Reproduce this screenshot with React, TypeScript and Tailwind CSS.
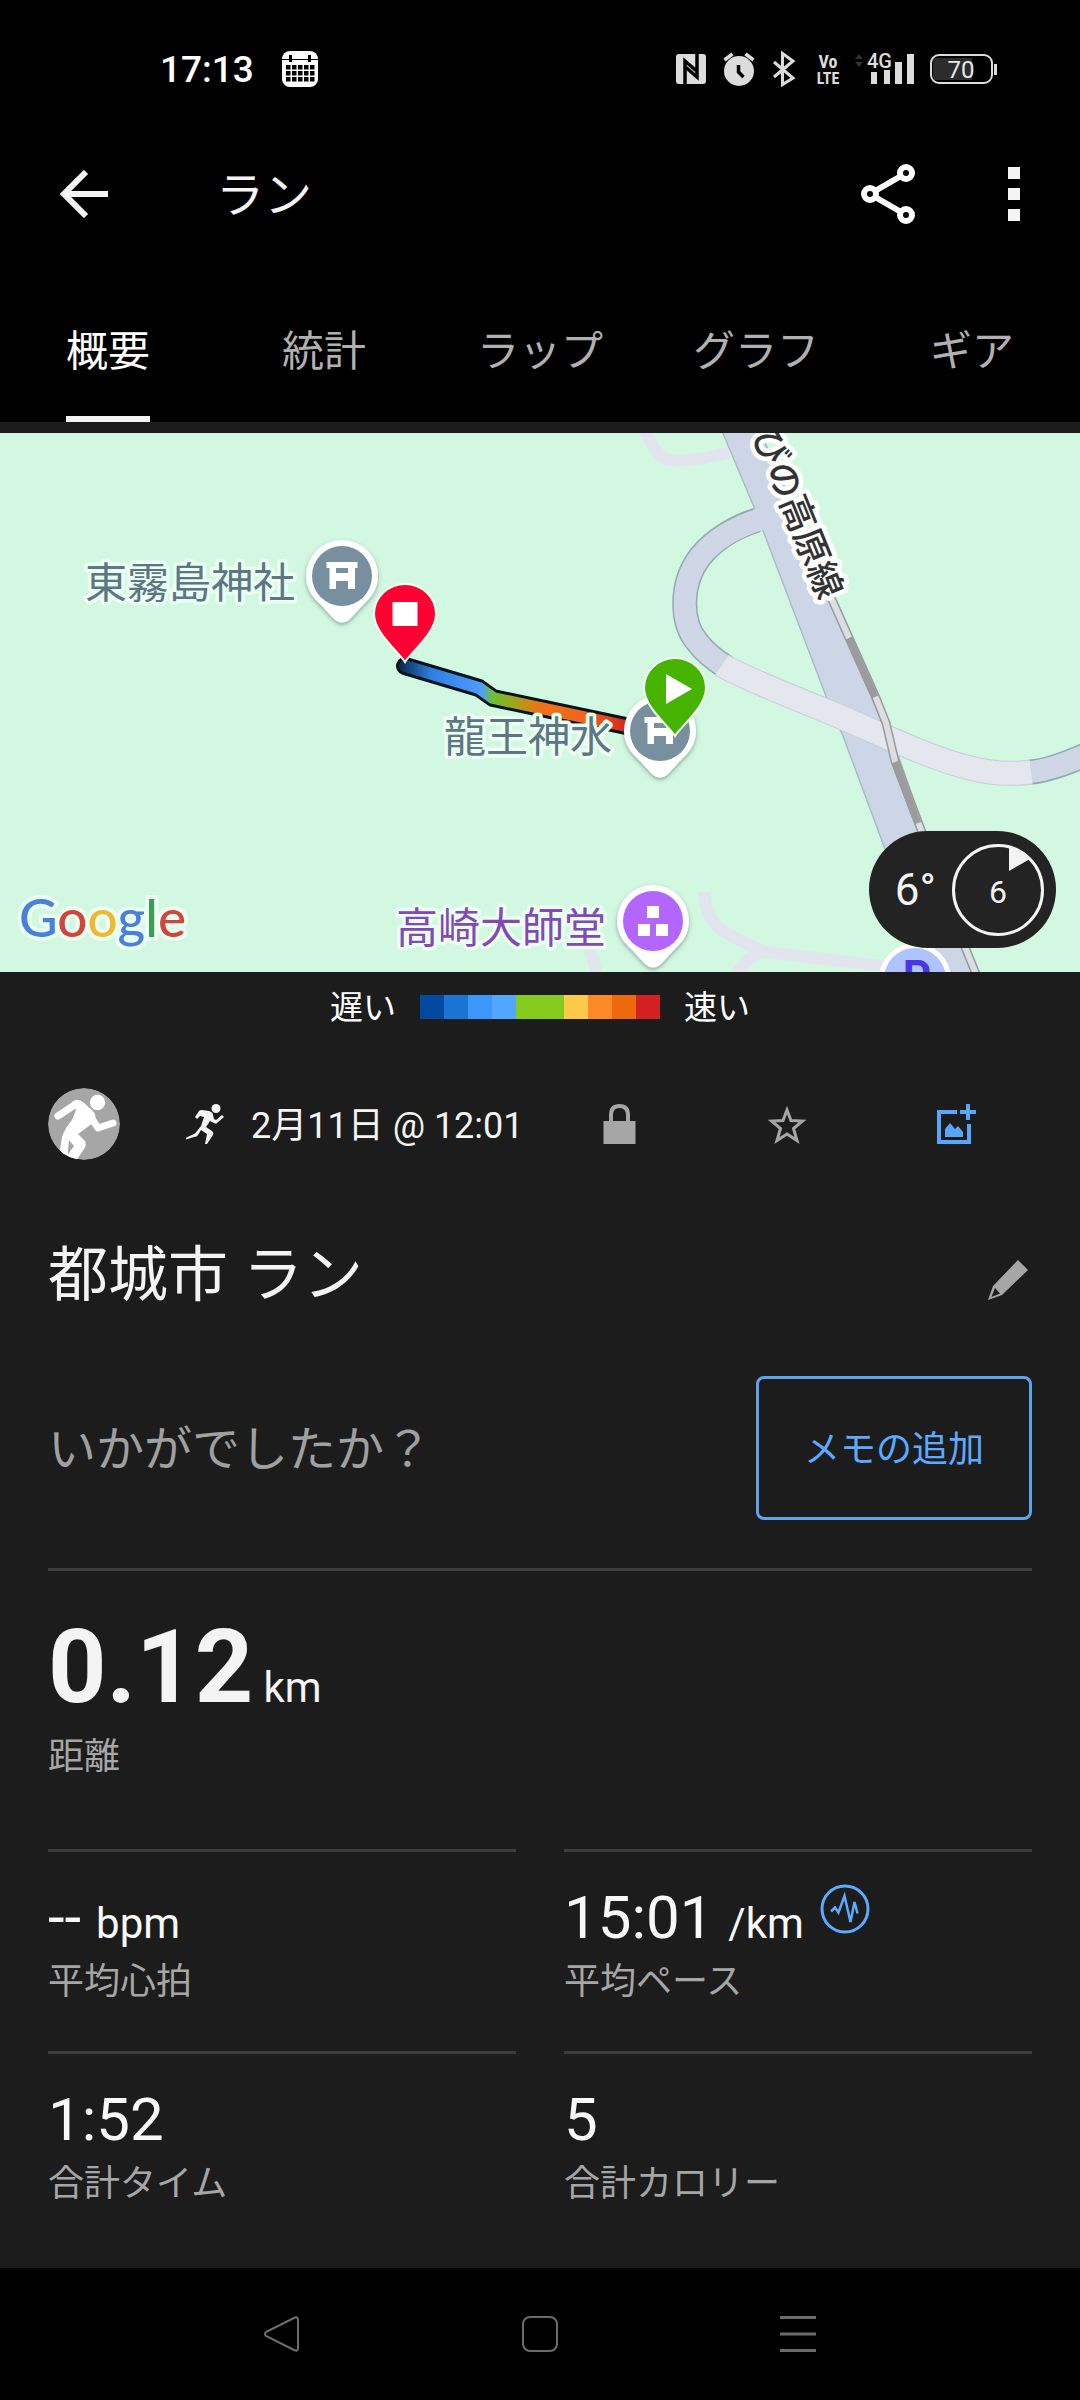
import { useState } from "react";
import type { ReactNode } from "react";

const TABS = ["概要", "統計", "ラップ", "グラフ", "ギア"];

const SPEED_COLORS = [
  "bg-[#014a9f]",
  "bg-[#1a75d2]",
  "bg-[#3b97f8]",
  "bg-[#52a6fd]",
  "bg-[#84cb1d]",
  "bg-[#84cb1d]",
  "bg-[#fdc94a]",
  "bg-[#fd8a26]",
  "bg-[#ee690b]",
  "bg-[#d32023]",
];

const GOOGLE = [
  ["G", "#4a7fe0"],
  ["o", "#d2453b"],
  ["o", "#ecb92f"],
  ["g", "#4a7fe0"],
  ["l", "#3f9c56"],
  ["e", "#d2453b"],
];

function StatusBar() {
  return (
    <div className="flex items-center justify-between bg-black pt-12 pr-[82px] pb-5 pl-40">
      <div className="flex h-[42px] items-center gap-7">
        <span className="pt-0.5 text-[37px] leading-[42px] font-medium text-white">17:13</span>
        <svg className="size-9" viewBox="0 0 36 36" fill="none">
          <rect width="36" height="36" rx="8" fill="#fff" />
          <path d="M0 8.500h36" stroke="#000" strokeWidth="1" />
          <path d="M8.500 4v7M27.500 4v7" stroke="#000" strokeWidth="3" />
          {[14, 20, 26].map((y) =>
            [4, 10, 16, 22, 28].map((x) => (
              <rect key={`${x}-${y}`} x={x} y={y} width="4.500" height="4.500" fill="#000" />
            ))
          )}
        </svg>
      </div>
      <svg className="h-[42px] w-[322px]" viewBox="676 48 322 42" fill="none">
        {/* NFC */}
        <rect x="676" y="54" width="30" height="30" rx="3" fill="#dcdcdc" />
        <path d="M685 84V61l11 9.500M697 54v23l-11-9.500" stroke="#000" strokeWidth="3.500" />
        {/* alarm */}
        <circle cx="739" cy="71" r="15" fill="#dcdcdc" />
        <path d="M724.500 60l8-6M753.500 60l-8-6" stroke="#dcdcdc" strokeWidth="3.500" />
        <path d="M738.500 65v7l5 5" stroke="#000" strokeWidth="3.500" />
        {/* bluetooth */}
        <path d="M774 62l19 16-10.500 6.500v-31L793 61l-19 16" stroke="#dcdcdc" strokeWidth="3" />
        <g fill="#dcdcdc" fontFamily="'Roboto Condensed', Roboto, sans-serif" fontWeight="700" textAnchor="middle">
          <text x="828" y="68" fontSize="18">Vo</text>
          <text x="828" y="84" fontSize="16">LTE</text>
        </g>
        <path d="M855 59l4-5 4 5zM855 62l4 5 4-5z" fill="#333" />
        <text x="867" y="68" fontSize="20" fontWeight="500" fill="#dcdcdc">4G</text>
        <path d="M871 72h6v12h-6zM884 70h6v14h-6zM895 62h7v22h-7zM907 54h7v30h-7z" fill="#dcdcdc" />
        {/* battery */}
        <path d="M935 58h37v22h-37q-2 0-2-4V62q0-4 2-4z" fill="#2c2c2c" />
        <rect x="931" y="55" width="61" height="28" rx="8" stroke="#dcdcdc" strokeWidth="2" />
        <path d="M995.500 64v11" stroke="#dcdcdc" strokeWidth="3" />
        <text x="961" y="78" fontSize="24" fill="#e8e8e8" textAnchor="middle">70</text>
      </svg>
    </div>
  );
}

function AppBar() {
  return (
    <header className="flex h-42 items-center bg-black px-[60px]">
      <button aria-label="戻る">
        <svg className="size-12" viewBox="0 0 48 48" fill="none" stroke="#f4f4f4" strokeWidth="6">
          <path d="M26 2L4 24l22 22M4 24h44" />
        </svg>
      </button>
      <h1 className="ml-[108px] flex-1 pt-1 text-[48px] leading-[60px] text-[#f4f4f4]">ラン</h1>
      <button aria-label="共有">
        <svg className="h-[60px] w-[54px]" viewBox="0 0 54 60" fill="none" stroke="#fff" strokeWidth="6">
          <path d="M14 27l26-15M14 33l26 15" />
          <circle cx="9" cy="30" r="6" />
          <circle cx="45" cy="9" r="6" />
          <circle cx="45" cy="51" r="6" />
        </svg>
      </button>
      <button aria-label="その他" className="ml-[93px] flex flex-col gap-[9px]">
        <span className="size-3 bg-[#f4f4f4]" />
        <span className="size-3 bg-[#f4f4f4]" />
        <span className="size-3 bg-[#f4f4f4]" />
      </button>
    </header>
  );
}

function PoiPin({ x, y, color, children }: { x: number; y: number; color: string; children: ReactNode }) {
  return (
    <g transform={`translate(${x} ${y})`}>
      <path
        d="M0-36A36 36 0 0 1 36 0C36 13 29 22 21 29L9 42Q0 51-9 42L-21 29C-29 22-36 13-36 0A36 36 0 0 1 0-36z"
        fill="#fff"
        filter="url(#pinShadow)"
      />
      <circle r="30" fill={color} />
      {children}
    </g>
  );
}

function Torii() {
  return (
    <path
      d="M-15.500-14h31v6h-2.500V13H6V5H-6v8h-6.500V-8h-3zM-6-8v5H6v-5z"
      fill="#fff"
      fillRule="evenodd"
    />
  );
}

function RouteMarker({ x, y, color, children }: { x: number; y: number; color: string; children: ReactNode }) {
  return (
    <g transform={`translate(${x} ${y})`}>
      <path
        d="M0 47C-6 37-31 18-31-1A31 30 0 0 1 31-1C31 18 6 37 0 47z"
        fill={color}
        stroke="#f2fff0"
        strokeWidth="2"
      />
      {children}
    </g>
  );
}

function ActivityMap() {
  return (
    <section className="relative mt-[11px] bg-[#d2f8e1]">
      <svg className="block w-full" viewBox="0 0 1080 539" fill="none">
        <defs>
          <filter id="pinShadow" x="-30%" y="-30%" width="160%" height="160%">
            <feDropShadow dx="0" dy="2" stdDeviation="2" floodColor="#456" floodOpacity="0.5" />
          </filter>
          <linearGradient id="pace" gradientUnits="userSpaceOnUse" x1="400" y1="0" x2="626" y2="0">
            <stop offset="0" stopColor="#0a2c50" />
            <stop offset="0.14" stopColor="#2f7fe0" />
            <stop offset="0.36" stopColor="#4d9dff" />
            <stop offset="0.41" stopColor="#6fbf30" />
            <stop offset="0.5" stopColor="#9aa81c" />
            <stop offset="0.62" stopColor="#ee7218" />
            <stop offset="0.82" stopColor="#f2641c" />
            <stop offset="1" stopColor="#d8261c" />
          </linearGradient>
        </defs>

        {/* footpaths */}
        <g stroke="#e2e5ed" strokeWidth="12">
          <path d="M645-6Q652 18 664 25T729 20" />
          <path d="M704 459Q706 486 722 497T766 519L890 534" />
          <path d="M766 517Q745 524 735 545M590 516l8 30" />
        </g>

        {/* highway */}
        <path
          d="M722-2L754 74 829 271 843 303 885 416 932 541 978 541 924 398 888 292 833 165 760-2z"
          fill="#cdd6e6"
          stroke="#a9bcc6"
          strokeWidth="1.500"
        />
        {/* ramp */}
        <path d="M757 87C738 93 715 105 700 124C680 150 680 190 698 210Q707 222 726 234" stroke="#94a9b3" strokeWidth="25" />
        <path d="M1030 339Q1050 338 1090 320" stroke="#94a9b3" strokeWidth="25" />
        <path d="M764 85C738 93 715 105 700 124C680 150 680 190 698 210Q707 222 726 234" stroke="#cfd7e7" strokeWidth="22" />
        <path d="M1028 339Q1050 338 1090 320" stroke="#cfd7e7" strokeWidth="22" />
        <path d="M722 232Q735 241 829 279C880 300 925 324 970 335Q1000 343 1031 339" stroke="#c8ced8" strokeWidth="25" />
        <path d="M722 232Q735 241 829 279C880 300 925 324 970 335Q1000 343 1031 339" stroke="#e4e7ee" strokeWidth="23" />
        {/* railway */}
        <path d="M829 160L850 207 876 265 886 290 895 328 920 394 965 514 976 541" stroke="#949a9e" strokeWidth="9" />
        <path d="M829 160L850 207 876 265 886 290 895 328 920 394 965 514 976 541" stroke="#dcdee2" strokeWidth="6" />
        <path d="M849 205L875 264M895 329L918 390" stroke="#9c9c9c" strokeWidth="7" />

        <text
          transform="translate(831 164) rotate(68)"
          textAnchor="end"
          dominantBaseline="central"
          fontSize="36"
          fontWeight="500"
          fill="#333"
          stroke="#fff"
          strokeWidth="9"
          strokeLinejoin="round"
          paintOrder="stroke"
        >
          びの高原線
        </text>

        {/* recorded track */}
        <path d="M405 233L479 255 493 265 626 293" stroke="#04141c" strokeWidth="18" strokeLinecap="round" strokeLinejoin="round" />
        <path d="M405 233L479 255 493 265 626 293" stroke="url(#pace)" strokeWidth="12" strokeLinecap="round" strokeLinejoin="round" />

        <PoiPin x={342} y={143} color="#788fa0">
          <Torii />
        </PoiPin>
        <PoiPin x={660} y={298} color="#788fa0">
          <Torii />
        </PoiPin>
        <PoiPin x={653} y={488} color="#b366ff">
          <path d="M-6-15H6V-3H-6zM-15 3H-3V15H-15zM3 3H15V15H3z" fill="#fff" />
        </PoiPin>
        <circle cx="915" cy="546" r="36" fill="#fff" />
        <circle cx="915" cy="546" r="31" fill="#afc4ff" />
        <text x="917" y="559" fontSize="44" fontWeight="700" fill="#4a35e8" textAnchor="middle">P</text>

        <g fontSize="42" stroke="#eafff2" strokeWidth="7" strokeLinejoin="round" paintOrder="stroke">
          <text x="85" y="165" fill="#5d7684">東霧島神社</text>
          <text x="444" y="319" fill="#5d7684">龍王神水</text>
          <text x="396" y="510" fill="#8448b8">高崎大師堂</text>
        </g>

        <RouteMarker x={405} y={182} color="#ff0032">
          <path d="M-12.500-13h25v24h-25z" fill="#fff" />
        </RouteMarker>
        <RouteMarker x={675} y={256} color="#45b300">
          <path d="M-9-15v30L17 0z" fill="#fff" />
        </RouteMarker>

        <text
          x="19"
          y="504"
          fontSize="53"
          fontFamily="Lato, sans-serif"
          fontWeight="500"
          stroke="#eafff2"
          strokeWidth="8"
          strokeLinejoin="round"
          paintOrder="stroke"
        >
          {GOOGLE.map(([char, fill], i) => (
            <tspan key={i} fill={fill}>
              {char}
            </tspan>
          ))}
        </text>
      </svg>

      {/* weather */}
      <div className="absolute right-6 bottom-6 flex h-[117px] items-center gap-4 rounded-full bg-[#232323] pr-3 pl-[26px] text-[#f4f4f4]">
        <span className="text-[44px] leading-[48px]">6°</span>
        <span className="relative flex size-[92px] items-center justify-center rounded-full border-3 border-[#f4f4f4] pt-1 text-[32px] leading-[36px]">
          6
          <svg className="absolute -inset-[3px]" viewBox="0 0 92 92" fill="#f4f4f4">
            <path d="M57 3Q70 7 78 15L57 27z" />
          </svg>
        </span>
      </div>
    </section>
  );
}

function SpeedLegend() {
  return (
    <div className="mt-4 flex items-center justify-center gap-6 text-[33px] leading-9 text-white">
      <span className="pt-0.5">遅い</span>
      <div className="flex">
        {SPEED_COLORS.map((color, i) => (
          <span key={i} className={`size-6 ${color}`} />
        ))}
      </div>
      <span className="pt-0.5">速い</span>
    </div>
  );
}

function ActivityHeader() {
  return (
    <div className="mt-[62px] flex items-center pr-10 pl-12">
      <svg className="size-18 shrink-0" viewBox="0 0 72 72" fill="none">
        <clipPath id="avatar">
          <circle cx="36" cy="36" r="36" />
        </clipPath>
        <g clipPath="url(#avatar)">
          <circle cx="36" cy="36" r="36" fill="#a6a6a6" />
          <circle cx="49.500" cy="14.500" r="7.700" fill="#fff" />
          <path d="M10 28L28 16" stroke="#fff" strokeWidth="7" strokeLinecap="round" />
          <path d="M24 14Q29 10 35 14L45 23Q50 29 45 35L30 46 37 53Q39 57 36 61L26 76 18 69 26 58 21 52 19 74 11 68 14 49Q17 40 24 32L28 22z" fill="#fff" />
          <path d="M42 28L50 40 65 35" stroke="#fff" strokeWidth="7" strokeLinecap="round" strokeLinejoin="round" />
        </g>
      </svg>
      <svg className="ml-[66px] h-10 w-[38px] shrink-0" viewBox="0 0 38 40" fill="#f4f4f4">
        <circle cx="30" cy="4.500" r="4.500" />
        <path d="M9 13l4-6q1-1 3-1l7 1q4 1 4 4l1 4 2 1 6-5 2 2-7 6q-1 1-3 0l-4-2-4 6 6 4q2 2 1 4l-6 9h-2l2-10-6-4-3 5q-1 2-4 2L0 35.500l-.5-1.500 8.500-4q2-1 3-3l4-5 3-9-4-1-3 3z" />
      </svg>
      <p className="ml-[27px] flex-1 pt-1 text-[36px] leading-[48px] whitespace-nowrap text-[#f4f4f4]">2月11日 @ 12:01</p>
      <button aria-label="非公開" className="flex w-42 justify-center">
        <svg className="size-10" viewBox="0 0 40 40" fill="#a6a6a6">
          <path d="M3.500 17h32v23h-32z" />
          <path d="M11 18v-7q0-9 8.500-9t8.500 9v7" fill="none" stroke="#a6a6a6" strokeWidth="4" />
        </svg>
      </button>
      <button aria-label="お気に入り" className="flex w-42 justify-center">
        <svg className="size-10" viewBox="0 0 40 40" fill="none" stroke="#a6a6a6" strokeWidth="3">
          <path d="M19 6l4 10.500 11.500 .5-9 7.500 3.500 12L19 30l-10 6.500 3.500-12-9-7.500L15 16.500z" />
        </svg>
      </button>
      <button aria-label="写真を追加" className="flex w-42 justify-center">
        <svg className="size-10" viewBox="0 0 40 40" fill="none" stroke="#57a6fb" strokeWidth="4">
          <path d="M21 8H3v30h30V20M32 0v16M24 8h16" />
          <path d="M9 33V25l5-6 5 6 3-3 5 6v5z" fill="#57a6fb" stroke="none" />
        </svg>
      </button>
    </div>
  );
}

interface StatProps {
  value: string;
  unit?: string;
  label: string;
  children?: ReactNode;
}

function Stat({ value, unit, label, children }: StatProps) {
  return (
    <div className="border-t-3 border-[#3c3c3c] pt-9 pb-[45px]">
      <div className="flex h-[60px]">
        <p className="text-[60px] leading-[60px] text-[#f8f8f8]">
          {value} {unit && <span className="text-[42px] leading-none">{unit}</span>}
        </p>
        {children}
      </div>
      <p className="mt-2.5 text-[36px] leading-[48px] text-[#a6a6a6]">{label}</p>
    </div>
  );
}

function NavBar() {
  return (
    <nav className="mt-auto flex h-[132px] items-center justify-center gap-[222px] bg-black">
      <button aria-label="戻る">
        <svg className="size-9" viewBox="0 0 36 36" fill="none" stroke="#6c6c6c" strokeWidth="2">
          <path d="M2 16L30 2q4-2 4 2v28q0 4-4 2L2 20q-2-2 0-4z" />
        </svg>
      </button>
      <button aria-label="ホーム">
        <svg className="size-9" viewBox="0 0 36 36" fill="none" stroke="#6c6c6c" strokeWidth="2">
          <rect x="1" y="1" width="34" height="34" rx="7" />
        </svg>
      </button>
      <button aria-label="履歴">
        <svg className="size-9" viewBox="0 0 36 36" fill="none" stroke="#6c6c6c" strokeWidth="3">
          <path d="M0 1.500h36M0 18h36M0 34.500h36" />
        </svg>
      </button>
    </nav>
  );
}

export default function App() {
  const [tab, setTab] = useState(TABS[0]);

  return (
    <div className="flex min-h-screen flex-col bg-[#1c1c1c] font-['Roboto','Noto_Sans_CJK_JP',sans-serif]" lang="ja">
      <StatusBar />
      <AppBar />
      <div className="grid grid-cols-5 bg-black">
        {TABS.map((name) => (
          <button key={name} onClick={() => setTab(name)} className="flex h-36 justify-center text-[42px] leading-[48px]">
            <span
              className={`flex h-full items-center border-y-6 border-t-transparent pt-1 ${
                name === tab ? "border-b-[#f4f4f4] text-white" : "border-b-transparent text-[#b0b0b0]"
              }`}
            >
              {name}
            </span>
          </button>
        ))}
      </div>

      <main>
        <ActivityMap />
        <SpeedLegend />
        <ActivityHeader />

        <div className="px-12">
          <div className="mt-20 flex items-center justify-between">
            <h2 className="text-[60px] leading-[72px] text-[#f4f4f4]">都城市 ラン</h2>
            <button aria-label="名前を編集" className="mt-2 mr-1">
              <svg className="size-10" viewBox="0 0 40 40" fill="#a6a6a6">
                <path d="M30 0l10 10-26 25L0 40l5-14zM7 28l-3.500 9L12 33.500z" fillRule="evenodd" />
              </svg>
            </button>
          </div>

          <div className="mt-16 flex items-center justify-between">
            <p className="pt-1 text-[48px] leading-[60px] text-[#a0a0a0]">いかがでしたか？</p>
            <button className="h-36 rounded-lg border-3 border-[#5da3ea] px-[45px] pt-1 text-[36px] leading-[48px] text-[#5caaff]">
              メモの追加
            </button>
          </div>

          <div className="mt-12 border-t-3 border-[#3c3c3c] pt-[46px]">
            <p className="text-[102px] leading-[100px] font-bold text-[#f4f4f4]">
              0.12<span className="text-[42px] leading-none font-normal"> km</span>
            </p>
            <p className="mt-4 text-[36px] leading-[48px] text-[#a6a6a6]">距離</p>
          </div>

          <div className="mt-17 grid grid-cols-2 gap-x-12">
            <Stat value="--" unit="bpm" label="平均心拍" />
            <Stat value="15:01" unit="/km" label="平均ペース">
              <button aria-label="ペースのグラフ" className="-mt-1 ml-4 size-[50px]">
                <svg viewBox="0 0 50 50" fill="none" stroke="#5caaff" strokeWidth="3">
                  <circle cx="25" cy="25" r="23" />
                  <path d="M11 27.500L15 23.500 18.500 28.500 24.500 12 30.500 38 34.500 18 37.500 29.500" strokeWidth="2.500" />
                </svg>
              </button>
            </Stat>
            <Stat value="1:52" label="合計タイム" />
            <Stat value="5" label="合計カロリー" />
          </div>
        </div>
      </main>

      <NavBar />
    </div>
  );
}
